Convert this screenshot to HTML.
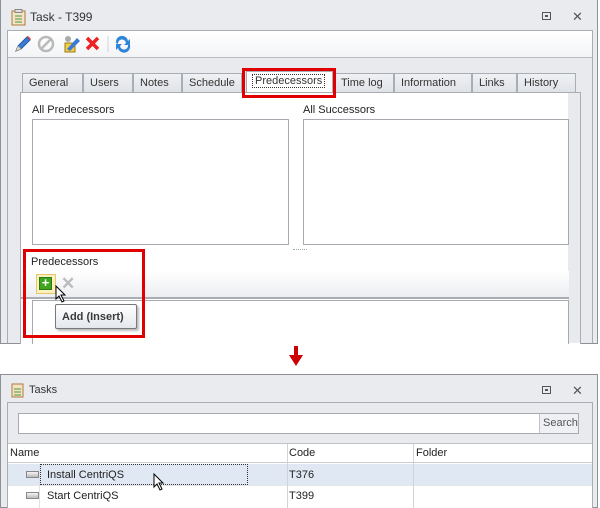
<!DOCTYPE html>
<html><head><style>
*{box-sizing:border-box;margin:0;padding:0}
body{width:600px;height:508px;background:#fff;position:relative;overflow:hidden;font-family:"Liberation Sans",sans-serif;font-size:11px;color:#222}
.a{position:absolute}
.tab{position:absolute;top:73px;height:19px;background:linear-gradient(#f0f1f3,#dfe2e7);border:1px solid #a9aeb6;border-bottom:none;padding:3px 0 0 6px;font-size:11px;color:#333}
.box{position:absolute;background:#fff;border:1px solid #a7abb1}
.red{position:absolute;border:3px solid #e10000}
</style></head><body>
<div class="a" style="left:0;top:0;width:598px;height:344px;background:#e9ebee;border:1px solid #8d9096;border-top:none"></div>
<svg class="a" style="left:11px;top:9px" width="15" height="17"><rect x="1" y="2" width="13" height="14" fill="#f4e3c6" stroke="#b27a3c"/><rect x="4" y="0.5" width="7" height="3" fill="#ddd" stroke="#888"/><line x1="4" y1="7" x2="11" y2="7" stroke="#4a9a3a"/><line x1="4" y1="10" x2="11" y2="10" stroke="#4a9a3a"/><line x1="4" y1="13" x2="11" y2="13" stroke="#4a9a3a"/></svg>
<div class="a" style="left:30px;top:10px;font-size:12px;color:#333">Task - T399</div>
<div class="a" style="left:542px;top:12px;width:9px;height:8px;border:1px solid #555"></div><div class="a" style="left:545px;top:15px;width:3px;height:2px;background:#555"></div>
<div class="a" style="left:572px;top:9px;font-size:13px;color:#555">✕</div>
<div class="a" style="left:7px;top:30px;width:586px;height:313px;background:#e8eaee;border:1px solid #a9adb3;border-bottom:none"></div>
<div class="a" style="left:8px;top:31px;width:584px;height:27px;background:linear-gradient(#fff,#f3f4f6);border-bottom:1px solid #b8bcc2"></div>
<svg class="a" style="left:12px;top:34px" width="125" height="20">
<path d="M4 17 L6 12 L15 3 L18 6 L9 15 Z" fill="#3a7bd5" stroke="#245a9e"/><path d="M15 3 L18 6 L19 5 L16 2Z" fill="#e33"/><path d="M4 17 L6 12 L9 15Z" fill="#f3d3a0"/>
<circle cx="34" cy="10" r="7" fill="none" stroke="#b9b9b9" stroke-width="2.5"/><line x1="29" y1="15" x2="39" y2="5" stroke="#b9b9b9" stroke-width="2.5"/>
<rect x="53" y="9" width="10" height="9" fill="#f2cf45" stroke="#9a7a10"/><path d="M55 15 L65 4 L68 7 L58 17Z" fill="#3a7bd5"/><circle cx="56" cy="5" r="3" fill="#aaa"/>
<path d="M75 4 L86 15 M86 4 L75 15" stroke="#e22" stroke-width="3.5"/>
<line x1="96" y1="2" x2="96" y2="18" stroke="#d0d3d8"/>
<path d="M104 9 A6 6 0 0 1 116 7 L118 5 L118 11 L112 11 L114 9 A4 4 0 0 0 106 10Z" fill="#2f86d8"/><path d="M118 11 A6 6 0 0 1 106 14 L104 16 L104 10 L110 10 L108 12 A4 4 0 0 0 116 11Z" fill="#2f86d8"/>
</svg>
<div class="tab" style="left:22px;width:61px">General</div>
<div class="tab" style="left:83px;width:50px">Users</div>
<div class="tab" style="left:133px;width:49px">Notes</div>
<div class="tab" style="left:182px;width:60px">Schedule</div>
<div class="tab" style="left:246px;top:71px;height:22px;width:87px;background:#fff;padding-left:5px"><span style="border:1px dotted #333;padding:0 2px">Predecessors</span></div>
<div class="tab" style="left:334px;width:60px">Time log</div>
<div class="tab" style="left:394px;width:78px">Information</div>
<div class="tab" style="left:472px;width:45px">Links</div>
<div class="tab" style="left:517px;width:59px">History</div>
<div class="a" style="left:20px;top:92px;width:561px;height:252px;background:#fff;border:1px solid #a9adb3;border-bottom:none"></div>
<div class="a" style="left:568px;top:93px;width:12px;height:250px;background:#e8eaee"></div>
<div class="a" style="left:32px;top:104px">All Predecessors</div>
<div class="a" style="left:303px;top:104px">All Successors</div>
<div class="box" style="left:32px;top:119px;width:257px;height:126px"></div>
<div class="box" style="left:303px;top:119px;width:266px;height:126px"></div>
<div class="a" style="left:293px;top:249px;width:14px;height:1px;border-top:1px dotted #9aa"></div>
<div class="a" style="left:31px;top:256px">Predecessors</div>
<div class="a" style="left:21px;top:271px;width:548px;height:28px;background:linear-gradient(#fff,#eceef1);border-bottom:2px solid #a9adb3"></div>
<div class="box" style="left:32px;top:300px;width:537px;height:44px;border-bottom:none"></div>
<div class="a" style="left:36px;top:274px;width:20px;height:20px;background:#fdf0c0;border:1px solid #e6c66a"></div>
<div class="a" style="left:39px;top:277px;width:13px;height:13px;background:#3fa51e;border:1px solid #2b7a12;color:#fff;font-weight:bold;font-size:13px;line-height:10px;text-align:center">+</div>
<div class="a" style="left:61px;top:274px;font-size:17px;color:#bbb;font-weight:bold">✕</div>
<svg class="a" style="left:55px;top:285px" width="12" height="18"><path d="M1 1 L1 14 L4 11 L7 17 L9 16 L6 10 L10 10Z" fill="#fff" stroke="#000"/></svg>
<div class="a" style="left:55px;top:304px;width:82px;height:25px;background:linear-gradient(#fff,#e4e7ec);border:1px solid #76787c;border-radius:2px;box-shadow:2px 2px 2px #bbb;font-weight:bold;font-size:11px;color:#3a3a3a;padding:6px 0 0 6px">Add (Insert)</div>
<div class="red" style="left:242px;top:68px;width:94px;height:30px"></div>
<div class="red" style="left:23px;top:249px;width:122px;height:89px"></div>
<div class="a" style="left:294px;top:346px;width:4px;height:9px;background:#c00"></div>
<div class="a" style="left:289px;top:355px;width:0;height:0;border-left:7px solid transparent;border-right:7px solid transparent;border-top:11px solid #c00"></div>
<div class="a" style="left:0;top:374px;width:598px;height:134px;background:#e9ebee;border:1px solid #8d9096"></div>
<svg class="a" style="left:11px;top:382px" width="13" height="16"><rect x="1" y="2" width="11" height="13" fill="#f4e3c6" stroke="#b27a3c"/><line x1="3" y1="7" x2="10" y2="7" stroke="#4a9a3a"/><line x1="3" y1="10" x2="10" y2="10" stroke="#4a9a3a"/><line x1="3" y1="13" x2="10" y2="13" stroke="#4a9a3a"/></svg>
<div class="a" style="left:29px;top:384px;color:#333">Tasks</div>
<div class="a" style="left:542px;top:386px;width:9px;height:8px;border:1px solid #555"></div><div class="a" style="left:545px;top:389px;width:3px;height:2px;background:#555"></div>
<div class="a" style="left:572px;top:383px;font-size:13px;color:#555">✕</div>
<div class="a" style="left:7px;top:402px;width:586px;height:106px;background:#e8eaee;border:1px solid #a9adb3"></div>
<div class="box" style="left:18px;top:413px;width:561px;height:21px"></div>
<div class="a" style="left:539px;top:414px;width:39px;height:19px;background:#eef0f3;border-left:1px solid #c0c4ca;color:#555;padding:3px 0 0 3px">Search</div>
<div class="a" style="left:8px;top:443px;width:584px;height:65px;background:#fff;border-top:1px solid #c0c4ca"></div>
<div class="a" style="left:8px;top:444px;width:584px;height:19px;background:#fff;border-bottom:1px solid #c9ccd1"></div>
<div class="a" style="left:10px;top:447px">Name</div>
<div class="a" style="left:289px;top:447px">Code</div>
<div class="a" style="left:416px;top:447px">Folder</div>
<div class="a" style="left:8px;top:464px;width:584px;height:21px;background:#dfe8f3"></div>
<div class="a" style="left:8px;top:485px;width:584px;height:1px;background:#e4e6e9"></div>
<div class="a" style="left:287px;top:444px;width:1px;height:64px;background:#d0d3d8"></div>
<div class="a" style="left:413px;top:444px;width:1px;height:64px;background:#d0d3d8"></div>
<div class="a" style="left:39px;top:464px;width:1px;height:44px;background:#e0e2e5"></div>
<div class="a" style="left:40px;top:464px;width:208px;height:21px;border:1px dotted #333"></div>
<div class="a" style="left:26px;top:471px;width:13px;height:7px;background:linear-gradient(#f4f4f4,#bbb);border:1px solid #888"></div>
<div class="a" style="left:26px;top:492px;width:13px;height:7px;background:linear-gradient(#f4f4f4,#bbb);border:1px solid #888"></div>
<div class="a" style="left:47px;top:469px">Install CentriQS</div>
<div class="a" style="left:47px;top:490px">Start CentriQS</div>
<div class="a" style="left:289px;top:469px">T376</div>
<div class="a" style="left:289px;top:490px">T399</div>
<svg class="a" style="left:153px;top:473px" width="12" height="18"><path d="M1 1 L1 14 L4 11 L7 17 L9 16 L6 10 L10 10Z" fill="#fff" stroke="#000"/></svg>
</body></html>
